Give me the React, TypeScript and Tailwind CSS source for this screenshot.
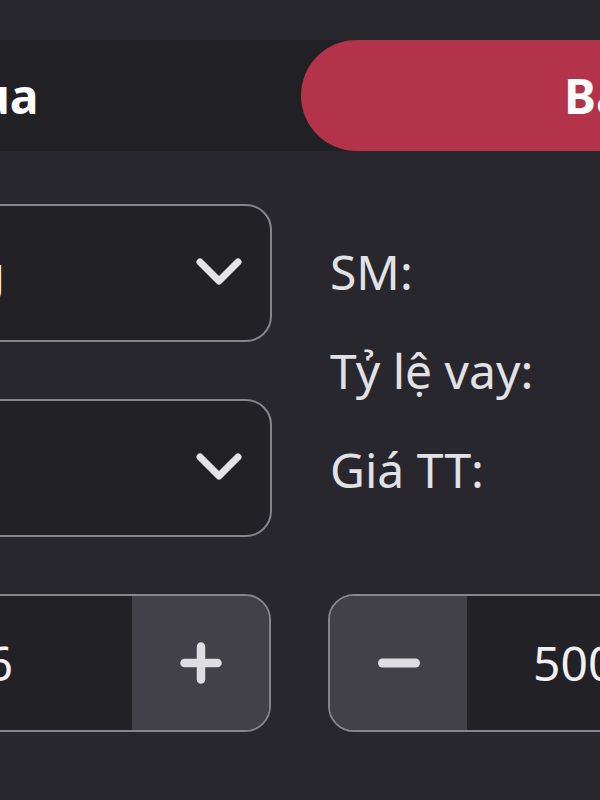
import React from 'react';

const Chevron: React.FC = () => (
  <svg width="46" height="30" viewBox="0 0 46 30" fill="none">
    <polyline
      points="4,4 23,23 42,4"
      stroke="#e4e3e7"
      strokeWidth="7"
      strokeLinecap="round"
      strokeLinejoin="round"
    />
  </svg>
);

const PlusIcon: React.FC = () => (
  <svg width="42" height="42" viewBox="0 0 42 42" fill="none">
    <path d="M21 4.5V37.5M4.5 21H37.5" stroke="#dedde1" strokeWidth="8.5" strokeLinecap="round" />
  </svg>
);

const MinusIcon: React.FC = () => (
  <svg width="42" height="42" viewBox="0 0 42 42" fill="none">
    <path d="M4.5 21H37.5" stroke="#dedde1" strokeWidth="9" strokeLinecap="round" />
  </svg>
);

export default function App() {
  return (
    <div
      className="w-[600px] h-[800px] overflow-hidden bg-[#28272d] text-white"
      style={{ fontFamily: '"Noto Sans", "Open Sans", sans-serif' }}
    >
      {/* Buy / Sell tabs */}
      <div className="mt-[40px] ml-[-321px] w-[1244px] h-[111px] grid grid-cols-2 bg-[#212024]">
        <div className="flex items-center justify-center pr-[8px] text-[48px] font-bold">Mua</div>
        <div className="flex items-center justify-center pr-[4px] rounded-l-full bg-[#b3344a] text-[48px] font-bold">
          Bán
        </div>
      </div>

      {/* Selects + info */}
      <div className="mt-[53px] ml-[-300px] w-[1300px] flex gap-[57px]">
        <div className="w-[572px] shrink-0 flex flex-col gap-[57px]">
          <div className="h-[138px] flex items-center rounded-[26px] border-2 border-[#86858c] bg-[#222126]">
            <span className="flex-1 text-right text-[48px] text-[#f1f0f3] whitespace-nowrap overflow-hidden">
              Lệnh thường
            </span>
            <div className="w-[265px] shrink-0 flex justify-end pr-[28px]">
              <Chevron />
            </div>
          </div>
          <div className="h-[138px] flex items-center justify-end pr-[28px] rounded-[26px] border-2 border-[#86858c] bg-[#222126]">
            <Chevron />
          </div>
        </div>
        <div className="w-[572px] shrink-0 pt-[18px] pl-[1px] flex flex-col text-[48px] leading-[99px] text-[#e2e1e5]">
          <span>SM:</span>
          <span>Tỷ lệ vay:</span>
          <span>Giá TT:</span>
        </div>
      </div>

      {/* Steppers */}
      <div className="mt-[57px] ml-[-300px] w-[1300px] flex gap-[57px]">
        <div className="w-[571px] shrink-0 h-[138px] flex rounded-[26px] border-2 border-[#86858c] overflow-hidden">
          <div className="flex-1 flex items-center justify-end pr-[119px] bg-[#222126] text-[48px] text-[#f1f0f3]">
            1.6
          </div>
          <div className="w-[137px] shrink-0 flex items-center justify-center bg-[#434148]">
            <PlusIcon />
          </div>
        </div>
        <div className="w-[573px] shrink-0 h-[138px] flex rounded-[26px] border-2 border-[#86858c] overflow-hidden">
          <div className="w-[137px] shrink-0 flex items-center justify-center bg-[#434148]">
            <MinusIcon />
          </div>
          <div className="flex-1 flex items-center pl-[66px] bg-[#222126] text-[48px] text-[#f1f0f3]">
            500.000
          </div>
          <div className="w-[137px] shrink-0 flex items-center justify-center bg-[#434148]">
            <PlusIcon />
          </div>
        </div>
      </div>
    </div>
  );
}
